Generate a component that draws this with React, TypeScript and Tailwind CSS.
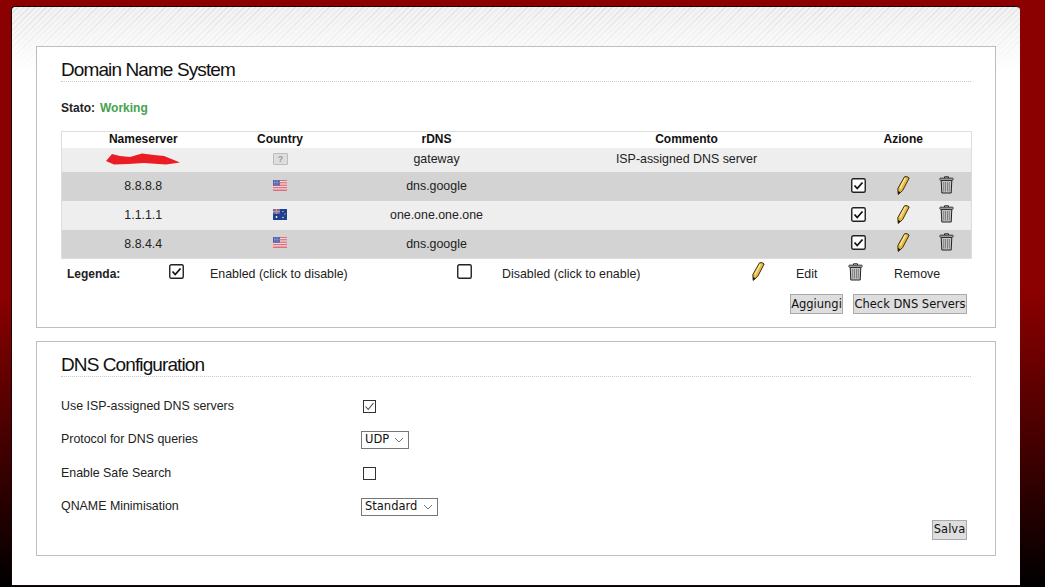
const rows = [
  { ns: "", flag: "unknown", rdns: "gateway", comment: "ISP-assigned DNS server", actions: false },
  { ns: "8.8.8.8", flag: "us", rdns: "dns.google", comment: "", actions: true },
  { ns: "1.1.1.1", flag: "au", rdns: "one.one.one.one", comment: "", actions: true },
  { ns: "8.8.4.4", flag: "us", rdns: "dns.google", comment: "", actions: true },
];

function CheckIcon({ checked }: { checked: boolean }) {
  return (
    <svg width="15" height="15" viewBox="0 0 15 15" className="block">
      <rect x="0.75" y="0.75" width="13.5" height="13.5" rx="1.5" fill="#fff" stroke="#222" strokeWidth="1.4" />
      {checked ? <path d="M3.5 7.5 L6.2 10.5 L11.5 4.5" fill="none" stroke="#111" strokeWidth="1.8" /> : null}
    </svg>
  );
}

function PencilIcon() {
  return (
    <svg width="13" height="19" viewBox="0 0 13 19" className="block">
      <path d="M7.6 0.7 Q10 0 12.2 2 L5.6 14.6 L1.2 18.4 L0.8 12.6 Z" fill="#e8b93f" stroke="#3a3010" strokeWidth="1" />
      <path d="M8.4 2 L3 12.6" stroke="#f7e3a0" strokeWidth="1.6" />
      <path d="M1.2 18.4 L1 15 L3.6 16.2 Z" fill="#1a1a1a" />
    </svg>
  );
}

function TrashIcon() {
  return (
    <svg width="15" height="18" viewBox="0 0 15 18" className="block">
      <path d="M5.5 2 V0.8 H9.5 V2" fill="none" stroke="#222" strokeWidth="1" />
      <rect x="0.8" y="2.2" width="13.4" height="2" rx="0.8" fill="#eee" stroke="#222" strokeWidth="1" />
      <path d="M2.2 4.4 H12.8 L12.2 17 H2.8 Z" fill="#c4c4c4" stroke="#222" strokeWidth="1" />
      <path d="M4.7 6 V15.5 M6.5 6 V15.5 M8.5 6 V15.5 M10.3 6 V15.5" stroke="#808080" strokeWidth="1" />
    </svg>
  );
}

function Flag({ kind }: { kind: string }) {
  if (kind === "unknown") {
    return (
      <svg width="15" height="12" viewBox="0 0 15 12" className="mx-auto mb-[2px] block">
        <rect x="0.5" y="0.5" width="14" height="11" rx="0.5" fill="#dedede" stroke="#bcbcbc" />
        <text x="7.5" y="9" fontSize="9" fontWeight="700" textAnchor="middle" fill="#9a9a9a" fontFamily="Liberation Sans">?</text>
      </svg>
    );
  }
  if (kind === "au") {
    return (
      <svg width="14" height="11" viewBox="0 0 14 11" className="mx-auto mb-[2px] block">
        <rect width="14" height="11" fill="#1f3f8f" />
        <rect width="7" height="5" fill="#5c6aa8" />
        <path d="M3.5 0 V5 M0 2.5 H7" stroke="#d98a95" strokeWidth="1.4" />
        <circle cx="3.5" cy="8" r="0.9" fill="#fff" />
        <circle cx="10" cy="2.5" r="0.6" fill="#fff" />
        <circle cx="12" cy="5" r="0.6" fill="#fff" />
        <circle cx="10" cy="8.5" r="0.7" fill="#fff" />
      </svg>
    );
  }
  return (
    <svg width="14" height="11" viewBox="0 0 14 11" className="mx-auto mb-[2px] block">
      <rect width="14" height="11" fill="#fff" />
      <path d="M0 .6 H14 M0 2.3 H14 M0 4 H14 M0 5.7 H14 M0 7.4 H14 M0 9.1 H14 M0 10.6 H14" stroke="#cf5060" strokeWidth="0.9" />
      <rect width="7" height="5.6" fill="#4a5aa8" />
      <path d="M1 1 H6.5 M1 2.5 H6.5 M1 4 H6.5" stroke="#c3c9ea" strokeWidth="0.7" strokeDasharray="1 0.6" />
    </svg>
  );
}

function Panel({ title, className, children }: { title: string; className: string; children: React.ReactNode }) {
  return (
    <section className={`border border-[#bdbdbd] bg-white px-6 ${className}`}>
      <h2 className="mt-[11px] h-[24px] border-b border-dotted border-[#c8c8c8] text-[19px] leading-[23px] tracking-[-0.9px] text-[#111]">{title}</h2>
      {children}
    </section>
  );
}

function Button({ label, className }: { label: string; className: string }) {
  return (
    <button type="button" className={`h-[20px] whitespace-nowrap border border-[#a9a9a9] bg-[#dedede] text-center font-['DejaVu_Sans',sans-serif] text-[11.5px] leading-[17px] text-[#111] ${className}`}>
      {label}
    </button>
  );
}

function ConfigRow({ label, children }: { label: string; children: React.ReactNode }) {
  return (
    <div className="flex h-[33.5px] items-center">
      <span className="w-[300px]">{label}</span>
      {children}
    </div>
  );
}

function FakeSelect({ value, className }: { value: string; className: string }) {
  return (
    <div className={`flex h-[18px] items-center justify-between border border-[#767676] bg-white pl-[3px] pr-[4px] font-['DejaVu_Sans',sans-serif] text-[11.5px] text-[#111] ${className}`}>
      <span>{value}</span>
      <svg width="10" height="6" viewBox="0 0 10 6"><path d="M1 1 L5 5 L9 1" fill="none" stroke="#777" strokeWidth="1" /></svg>
    </div>
  );
}

function BoxSmall({ checked }: { checked: boolean }) {
  return (
    <svg width="13" height="13" viewBox="0 0 13 13" className="ml-[2px] block">
      <rect x="0.5" y="0.5" width="12" height="12" fill="#fff" stroke="#333" />
      {checked ? <path d="M2.5 6.5 L5.2 9.5 L10.5 3" fill="none" stroke="#444" strokeWidth="1.1" /> : null}
    </svg>
  );
}

export default function App() {
  return (
    <div className="h-[587px] w-full overflow-hidden bg-[linear-gradient(to_bottom,#8b0000_0%,#8b0000_50%,#000_100%)] pl-[11px] pt-[6px] font-['Liberation_Sans',Arial,sans-serif] text-[12.4px] text-[#222]">
      <div className="h-[580px] w-[1009px] rounded-t-[4px] border-b border-l border-t border-[#1a0505] bg-white bg-[linear-gradient(to_bottom,rgba(255,255,255,0)_0,#fff_64px),repeating-linear-gradient(135deg,#e2e2e2_0,#e2e2e2_1px,#f2f2f2_1px,#f2f2f2_4px)] pl-[24px] pr-[24px] pt-[39px]">
        <Panel title="Domain Name System" className="h-[282px]">
          <p className="mt-[18px] flex h-[16px] items-center">
            <b className="text-[12px] text-[#222]">Stato:</b>
            <b className="ml-[5px] text-[12px] text-[#45a24e]">Working</b>
          </p>
          <table className="mt-[15px] w-[910px] table-fixed border-collapse border border-[#ddd] text-center">
            <colgroup>
              <col className="w-[163px]" />
              <col className="w-[111px]" />
              <col className="w-[202px]" />
              <col className="w-[298px]" />
              <col className="w-[45px]" />
              <col className="w-[45px]" />
              <col className="w-[46px]" />
            </colgroup>
            <thead>
              <tr className="h-[16px] bg-white text-[12px] font-bold text-[#111]">
                <th className="leading-[15px]">Nameserver</th>
                <th className="leading-[15px]">Country</th>
                <th className="leading-[15px]">rDNS</th>
                <th className="leading-[15px]">Commento</th>
                <th colSpan={3} className="leading-[15px]">Azione</th>
              </tr>
            </thead>
            <tbody>
              {rows.map((row, i) => (
                <tr key={i} className={i % 2 ? "h-[29px] bg-[#d3d3d3]" : i ? "h-[29px] bg-[#eeeeee]" : "h-[24px] bg-[#eeeeee]"}>
                  <td className={i ? "pt-[1px]" : "pb-[1px]"}>
                    {row.ns || (
                      <svg width="74" height="12" viewBox="0 0 74 12" className="mx-auto block">
                        <path d="M0 8 L6 1 L14 3 L24 4 L36 0.5 L48 2 L58 3 L74 9.5 L60 11.5 L38 10 L22 11 L8 11.5 Z" fill="#ea1c24" />
                      </svg>
                    )}
                  </td>
                  <td><Flag kind={row.flag} /></td>
                  <td className={i ? "pt-[1px]" : "pb-[1px]"}>{row.rdns}</td>
                  <td className={i ? "pt-[1px]" : "pb-[1px]"}>{row.comment}</td>
                  {row.actions ? (
                    <>
                      <td><span className="flex justify-center pb-[2px]"><CheckIcon checked /></span></td>
                      <td><span className="flex justify-center pb-[2px]"><PencilIcon /></span></td>
                      <td><span className="flex justify-center pb-[3px] pr-[3px]"><TrashIcon /></span></td>
                    </>
                  ) : (
                    <td colSpan={3} />
                  )}
                </tr>
              ))}
            </tbody>
          </table>
          <div className="flex h-[29px] items-center">
            <b className="ml-[6px] w-[102px] text-[12px] text-[#222]">Legenda:</b>
            <span className="mb-[4px] w-[41px]"><CheckIcon checked /></span>
            <span className="w-[247px] pt-[1px]">Enabled (click to disable)</span>
            <span className="mb-[4px] w-[45px]"><CheckIcon checked={false} /></span>
            <span className="w-[250px] pt-[1px]">Disabled (click to enable)</span>
            <span className="mb-[5px] w-[44px]"><PencilIcon /></span>
            <span className="w-[52px] pt-[1px]">Edit</span>
            <span className="mb-[4px] w-[46px]"><TrashIcon /></span>
            <span className="pt-[1px]">Remove</span>
          </div>
          <div className="mt-[6px] flex justify-end gap-[10px] pr-[4px]">
            <Button label="Aggiungi" className="w-[53px]" />
            <Button label="Check DNS Servers" className="w-[114px]" />
          </div>
        </Panel>
        <Panel title="DNS Configuration" className="mt-[13px] h-[215px]">
          <div className="mt-[12.5px]">
            <ConfigRow label="Use ISP-assigned DNS servers"><BoxSmall checked /></ConfigRow>
            <ConfigRow label="Protocol for DNS queries"><FakeSelect value="UDP" className="w-[48px]" /></ConfigRow>
            <ConfigRow label="Enable Safe Search"><BoxSmall checked={false} /></ConfigRow>
            <ConfigRow label="QNAME Minimisation"><FakeSelect value="Standard" className="w-[77px]" /></ConfigRow>
          </div>
          <div className="mt-[-4px] flex justify-end pr-[4px]">
            <Button label="Salva" className="w-[35px]" />
          </div>
        </Panel>
      </div>
    </div>
  );
}
